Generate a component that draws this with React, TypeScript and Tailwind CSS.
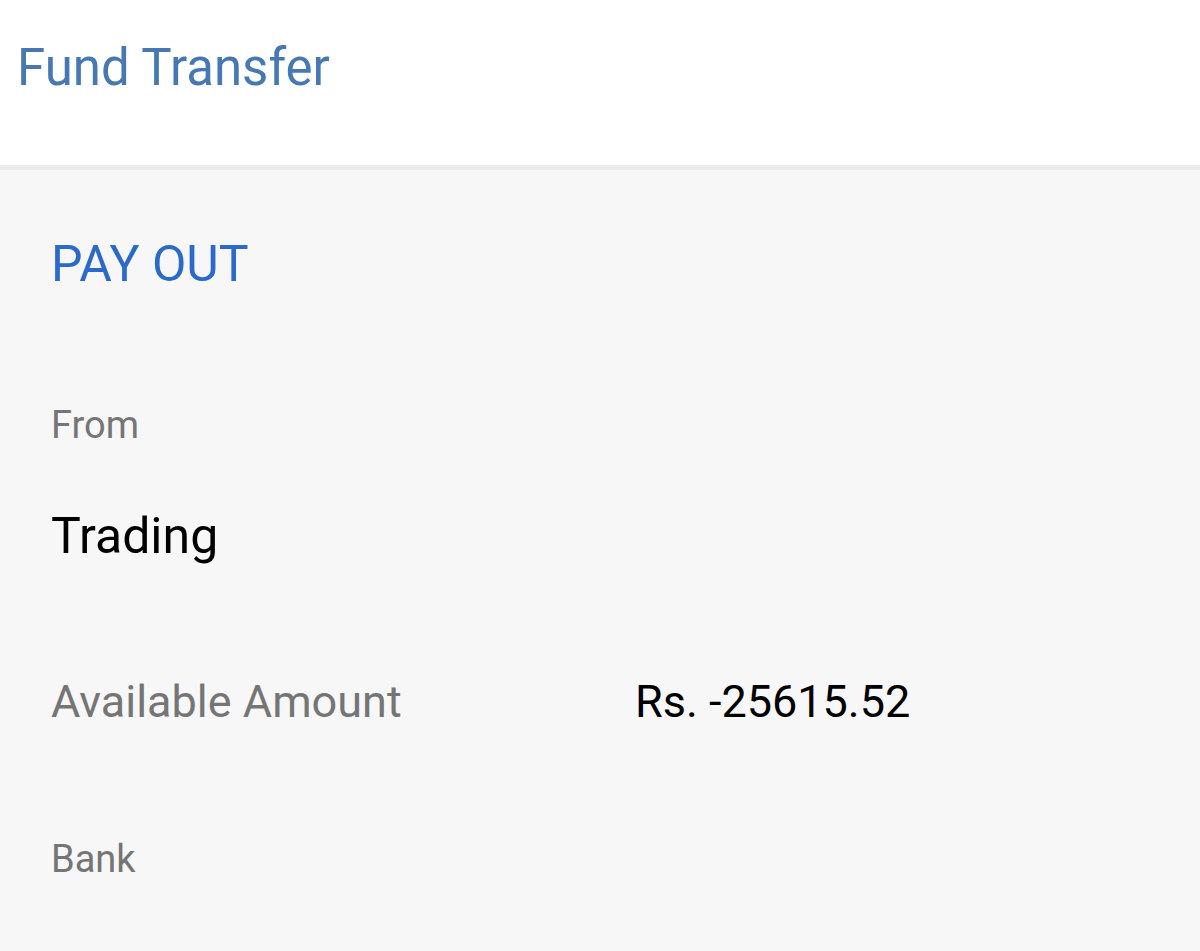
import React from 'react';

const App: React.FC = () => {
  return (
    <div className="min-h-[951px] bg-[#f7f7f7]" style={{ fontFamily: 'Roboto, "Noto Sans", sans-serif' }}>
      <header className="h-[170px] bg-white border-b-[5px] border-[#ebebeb] pl-[17px] pt-[42px]">
        <h1 className="text-[51px] leading-none text-[#4678b4]">Fund Transfer</h1>
      </header>

      <main className="pl-[51px] pt-[69px]">
        <h2 className="text-[50px] leading-none text-[#2a6acd]">PAY OUT</h2>

        <div className="mt-[117px] text-[38px] leading-none text-[#757575]">From</div>
        <div className="mt-[67px] text-[50px] leading-none text-black">Trading</div>

        <div className="mt-[118px] flex text-[45px] leading-none">
          <span className="w-[584px] text-[#757575]">Available Amount</span>
          <span className="text-black">Rs. -25615.52</span>
        </div>

        <div className="mt-[116px] text-[38px] leading-none text-[#757575]">Bank</div>
      </main>
    </div>
  );
};

export default App;
